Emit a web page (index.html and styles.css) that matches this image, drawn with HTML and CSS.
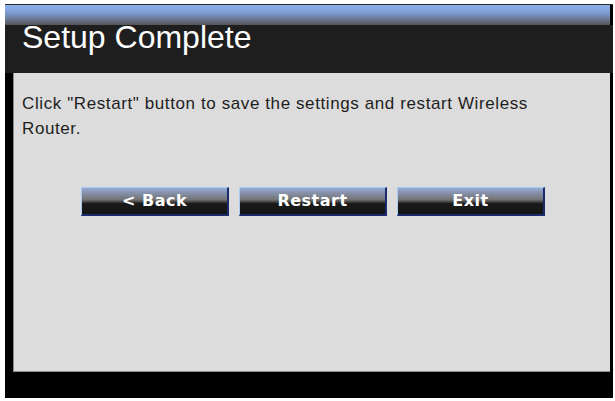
FILE: index.html
```html
<!DOCTYPE html>
<html>
<head>
<meta charset="utf-8">
<title>Setup Complete</title>
<link rel="stylesheet" href="styles.css">
</head>
<body>
<div class="frame">
  <div class="topline"></div>
  <div class="glow"></div>
  <div class="title">Setup Complete</div>
  <div class="content">
    <p class="message">Click "Restart" button to save the settings and restart Wireless Router.</p>
    <div class="buttons">
      <button class="btn">&lt; Back</button>
      <button class="btn">Restart</button>
      <button class="btn">Exit</button>
    </div>
  </div>
</div>
</body>
</html>
```
FILE: styles.css
```css
html, body {
  margin: 0;
  padding: 0;
  background: #ffffff;
}
.frame {
  margin: 4px 0 0 5px;
  width: 608px;
  height: 394px;
  background: #000000;
  display: flex;
  flex-direction: column;
}
.topline {
  height: 1px;
  background: #2b2b2b;
}
.glow {
  height: 20px;
  margin-right: 3px;
  background: linear-gradient(to bottom, #8fb2ea 0%, #7f9fd6 35%, #6f7fa0 65%, #555555 100%);
}
.title {
  height: 48px;
  background: #1e1e1e;
  color: #ffffff;
  font-family: "Liberation Sans", Arial, sans-serif;
  font-size: 32px;
  line-height: 24px;
  padding-left: 17px;
  box-sizing: border-box;
}
.content {
  flex: 1;
  margin: 0 3px 26px 8px;
  background: #dcdcdc;
  border-left: 1px solid #8a8a8a;
  border-bottom: 1px solid #8a8a8a;
  padding: 18px 0 0 8px;
}
.message {
  margin: 0;
  width: 560px;
  font-family: "Liberation Sans", Arial, sans-serif;
  font-size: 17px;
  letter-spacing: 0.6px;
  line-height: 25px;
  color: #1e1e1e;
}
.buttons {
  display: flex;
  gap: 10px;
  margin-top: 46px;
  padding-left: 59px;
}
.btn {
  width: 148px;
  height: 29px;
  box-sizing: border-box;
  padding: 0;
  border-style: solid;
  border-width: 1px 2px 2px 1px;
  border-color: #a9cbf2 #1b2a6e #1b2a6e #a9cbf2;
  background: linear-gradient(to bottom, #97abd4 0%, #8590a8 20%, #727272 45%, #404040 54%, #1a1a1a 60%, #151515 100%);
  color: #ffffff;
  font-family: "DejaVu Sans", Verdana, sans-serif;
  font-weight: bold;
  font-size: 16px;
  letter-spacing: 0.5px;
  line-height: 26px;
}
```
